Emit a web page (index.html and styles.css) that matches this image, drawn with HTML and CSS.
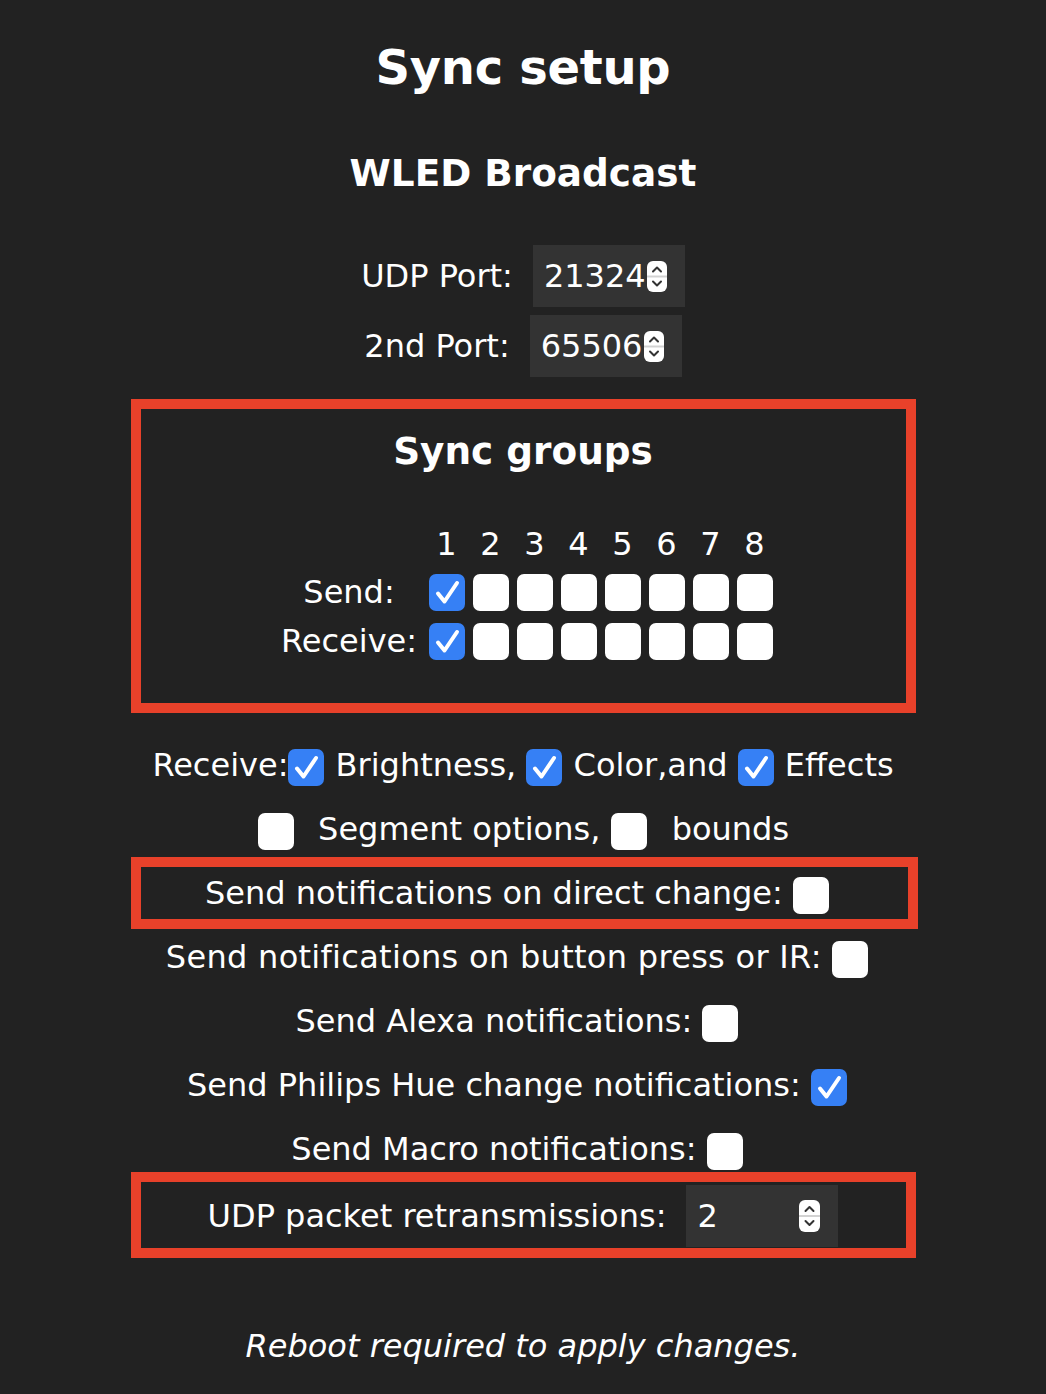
FILE: index.html
```html
<!DOCTYPE html>
<html lang="en">
<head>
<meta charset="utf-8">
<title>Sync setup</title>
<link rel="stylesheet" href="styles.css">
</head>
<body>
<main class="page">
  <h2 class="title">Sync setup</h2>
  <h3 class="subtitle">WLED Broadcast</h3>

  <div class="field field-first">
    <span class="label">UDP Port:</span>
    <span class="num"><span class="num-val">21324</span><svg class="spin" width="20" height="31" viewBox="0 0 20 31"><rect width="20" height="31" rx="6" fill="#fff"/><path d="M0 15.5H20" stroke="#d2d2d2" stroke-width="2"/><path d="M6 10.5l4-4 4 4M6 20.5l4 4 4-4" fill="none" stroke="#333" stroke-width="2" stroke-linecap="round" stroke-linejoin="round"/></svg></span>
  </div>
  <div class="field">
    <span class="label">2nd Port:</span>
    <span class="num"><span class="num-val">65506</span><svg class="spin" width="20" height="31" viewBox="0 0 20 31"><rect width="20" height="31" rx="6" fill="#fff"/><path d="M0 15.5H20" stroke="#d2d2d2" stroke-width="2"/><path d="M6 10.5l4-4 4 4M6 20.5l4 4 4-4" fill="none" stroke="#333" stroke-width="2" stroke-linecap="round" stroke-linejoin="round"/></svg></span>
  </div>

  <section class="groups">
    <h3 class="subtitle">Sync groups</h3>
    <div class="grid">
      <span></span>
      <span>1</span><span>2</span><span>3</span><span>4</span><span>5</span><span>6</span><span>7</span><span>8</span>

      <span class="rowlabel">Send:</span>
      <span class="cb on"><svg width="36" height="37" viewBox="0 0 36 37"><path d="M9 19.5l6.5 8L28 9" fill="none" stroke="#fff" stroke-width="4" stroke-linecap="round" stroke-linejoin="round"/></svg></span>
      <span class="cb"></span><span class="cb"></span><span class="cb"></span><span class="cb"></span><span class="cb"></span><span class="cb"></span><span class="cb"></span>

      <span class="rowlabel">Receive:</span>
      <span class="cb on"><svg width="36" height="37" viewBox="0 0 36 37"><path d="M9 19.5l6.5 8L28 9" fill="none" stroke="#fff" stroke-width="4" stroke-linecap="round" stroke-linejoin="round"/></svg></span>
      <span class="cb"></span><span class="cb"></span><span class="cb"></span><span class="cb"></span><span class="cb"></span><span class="cb"></span><span class="cb"></span>
    </div>
  </section>

  <p class="line line-receive">Receive:<span class="cb on"><svg width="36" height="37" viewBox="0 0 36 37"><path d="M9 19.5l6.5 8L28 9" fill="none" stroke="#fff" stroke-width="4" stroke-linecap="round" stroke-linejoin="round"/></svg></span> Brightness, <span class="cb on"><svg width="36" height="37" viewBox="0 0 36 37"><path d="M9 19.5l6.5 8L28 9" fill="none" stroke="#fff" stroke-width="4" stroke-linecap="round" stroke-linejoin="round"/></svg></span> Color,and <span class="cb on"><svg width="36" height="37" viewBox="0 0 36 37"><path d="M9 19.5l6.5 8L28 9" fill="none" stroke="#fff" stroke-width="4" stroke-linecap="round" stroke-linejoin="round"/></svg></span> Effects</p>
  <p class="line"><span class="cb wide"></span> Segment options, <span class="cb wide"></span> bounds</p>

  <p class="line marked mark-direct">Send notifications on direct change: <span class="cb end"></span></p>
  <p class="line line-loose">Send notifications on button press or IR: <span class="cb end"></span></p>
  <p class="line">Send Alexa notifications: <span class="cb end"></span></p>
  <p class="line">Send Philips Hue change notifications: <span class="cb end on"><svg width="36" height="37" viewBox="0 0 36 37"><path d="M9 19.5l6.5 8L28 9" fill="none" stroke="#fff" stroke-width="4" stroke-linecap="round" stroke-linejoin="round"/></svg></span></p>
  <p class="line">Send Macro notifications: <span class="cb end"></span></p>

  <div class="field marked mark-retrans">
    <span class="label">UDP packet retransmissions:</span>
    <span class="num"><span class="num-val">2</span><svg class="spin" width="21" height="32" viewBox="0 0 21 32"><rect width="21" height="32" rx="6" fill="#fff"/><path d="M0 16H21" stroke="#d2d2d2" stroke-width="2"/><path d="M6.5 11l4-4 4 4M6.5 21l4 4 4-4" fill="none" stroke="#333" stroke-width="2" stroke-linecap="round" stroke-linejoin="round"/></svg></span>
  </div>

  <p class="note">Reboot required to apply changes.</p>
</main>
</body>
</html>
```

FILE: styles.css
```css
* {
  box-sizing: border-box;
}

html,
body {
  margin: 0;
  padding: 0;
}

body {
  background: #222;
  color: #fff;
  font-family: "DejaVu Sans", Verdana, sans-serif;
  font-size: 32px;
  line-height: 64px;
  text-align: center;
}

.page {
  padding-top: 35px;
}

.title {
  margin: 0;
  font-size: 48px;
  line-height: 64px;
  font-weight: bold;
  letter-spacing: -0.3px;
}

.subtitle {
  margin: 0;
  font-size: 37.4px;
  line-height: 64px;
  font-weight: bold;
}

.title + .subtitle {
  margin-top: 42px;
}

/* label + number input rows */
.field {
  display: flex;
  justify-content: center;
  align-items: center;
  gap: 20px;
  height: 70px;
}

.field-first {
  margin-top: 36px;
}

.label {
  white-space: nowrap;
}

.num {
  display: flex;
  align-items: center;
  justify-content: space-between;
  width: 152px;
  height: 62px;
  background: #333;
  padding: 0 18px 0 11px;
  line-height: 1;
  text-align: left;
}

.num-val {
  white-space: nowrap;
}

.spin {
  display: block;
  flex: none;
}

/* sync groups */
.groups {
  width: 785px;
  margin: 18px auto 0;
  border: 10px solid #e8412a;
  padding: 10px 0 37px;
}

.grid {
  display: grid;
  width: fit-content;
  margin: 37px auto 0;
  padding-left: 4px;
  grid-template-columns: 143px repeat(8, 36px);
  grid-template-rows: 48px 48px 50px;
  column-gap: 8px;
  align-items: center;
  justify-items: center;
  line-height: 48px;
}

.rowlabel {
  white-space: nowrap;
}

/* checkboxes */
.cb {
  display: inline-block;
  width: 36px;
  height: 37px;
  border-radius: 7px;
  background: #fff;
  vertical-align: middle;
  margin: 0 2px 0 1px;
}

.grid .cb {
  margin: 0;
}

.cb svg {
  display: block;
}

.cb.on {
  background: #3680f5;
}

.cb.wide {
  margin-right: 14px;
}

.cb.end {
  margin: 0 12px 0 0;
}

/* text rows */
.line {
  margin: 0;
  height: 64px;
  line-height: 64px;
  white-space: nowrap;
}

.line-receive {
  margin-top: 20px;
}

.line-receive .cb {
  margin: 0 1px 0 0;
}

.line-loose {
  letter-spacing: 0.3px;
}

/* red annotation frames drawn over rows */
.marked {
  position: relative;
}

.marked::after {
  content: "";
  position: absolute;
  border: 10px solid #e8412a;
  pointer-events: none;
}

.mark-direct::after {
  top: -4px;
  bottom: -4px;
  left: 131px;
  right: 128px;
}

.mark-retrans::after {
  top: -9px;
  bottom: -7px;
  left: 131px;
  right: 130px;
}

.note {
  margin: 63px 0 0;
  font-style: italic;
  line-height: 64px;
}
```
